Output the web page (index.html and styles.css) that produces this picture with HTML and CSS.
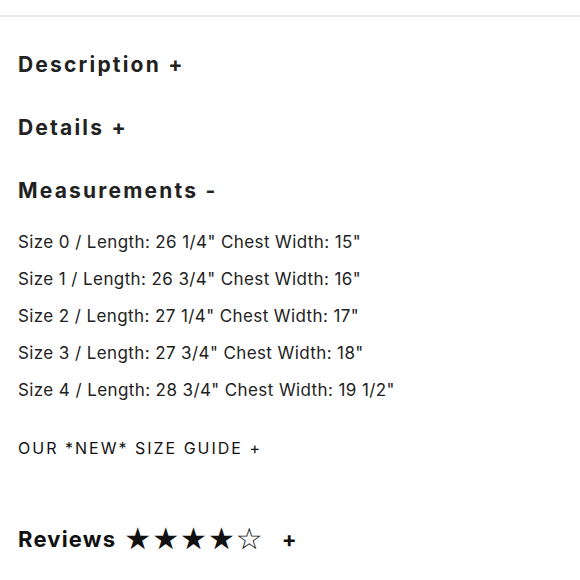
FILE: index.html
```html
<!DOCTYPE html>
<html>
<head>
<meta charset="utf-8">
<link rel="stylesheet" href="styles.css">
</head>
<body>
<div class="topbar"></div>
<main class="content">
  <h2 class="acc-title">Description +</h2>
  <h2 class="acc-title">Details +</h2>
  <h2 class="acc-title">Measurements -</h2>
  <ul class="sizes">
    <li>Size 0 / Length: 26 1/4" Chest Width: 15"</li>
    <li>Size 1 / Length: 26 3/4" Chest Width: 16"</li>
    <li>Size 2 / Length: 27 1/4" Chest Width: 17"</li>
    <li>Size 3 / Length: 27 3/4" Chest Width: 18"</li>
    <li>Size 4 / Length: 28 3/4" Chest Width: 19 1/2"</li>
  </ul>
  <p class="guide">OUR *NEW* SIZE GUIDE +</p>
  <h2 class="reviews">Reviews <span class="stars">★★★★☆</span><span class="plus">+</span></h2>
</main>
</body>
</html>
```
FILE: styles.css
```css
html, body {
  margin: 0;
  padding: 0;
  background: #fff;
}
body {
  font-family: "Inter", "Liberation Sans", sans-serif;
  color: #222;
}
.topbar {
  height: 15px;
  border-bottom: 2px solid #ebebeb;
}
.content {
  padding: 16px 18px 0;
}
.acc-title {
  margin: 0;
  font-size: 21px;
  font-weight: 700;
  letter-spacing: 2.2px;
  line-height: 63px;
  height: 63px;
}
.sizes {
  list-style: none;
  margin: 2px 0 0;
  padding: 0;
}
.sizes li {
  font-size: 17px;
  letter-spacing: 0.4px;
  line-height: 37px;
}
.guide {
  margin: 21px 0 0;
  font-size: 16px;
  letter-spacing: 2px;
  line-height: 37px;
  color: #111;
}
.reviews {
  margin: 42px 0 0;
  font-size: 22px;
  font-weight: 700;
  letter-spacing: 1.2px;
  line-height: 60px;
  color: #111;
  display: flex;
  align-items: center;
}
.stars {
  font-family: "DejaVu Sans", sans-serif;
  font-weight: 400;
  letter-spacing: 1px;
  font-size: 30px;
  margin-left: 8px;
}
.plus {
  margin-left: 18px;
}
```
